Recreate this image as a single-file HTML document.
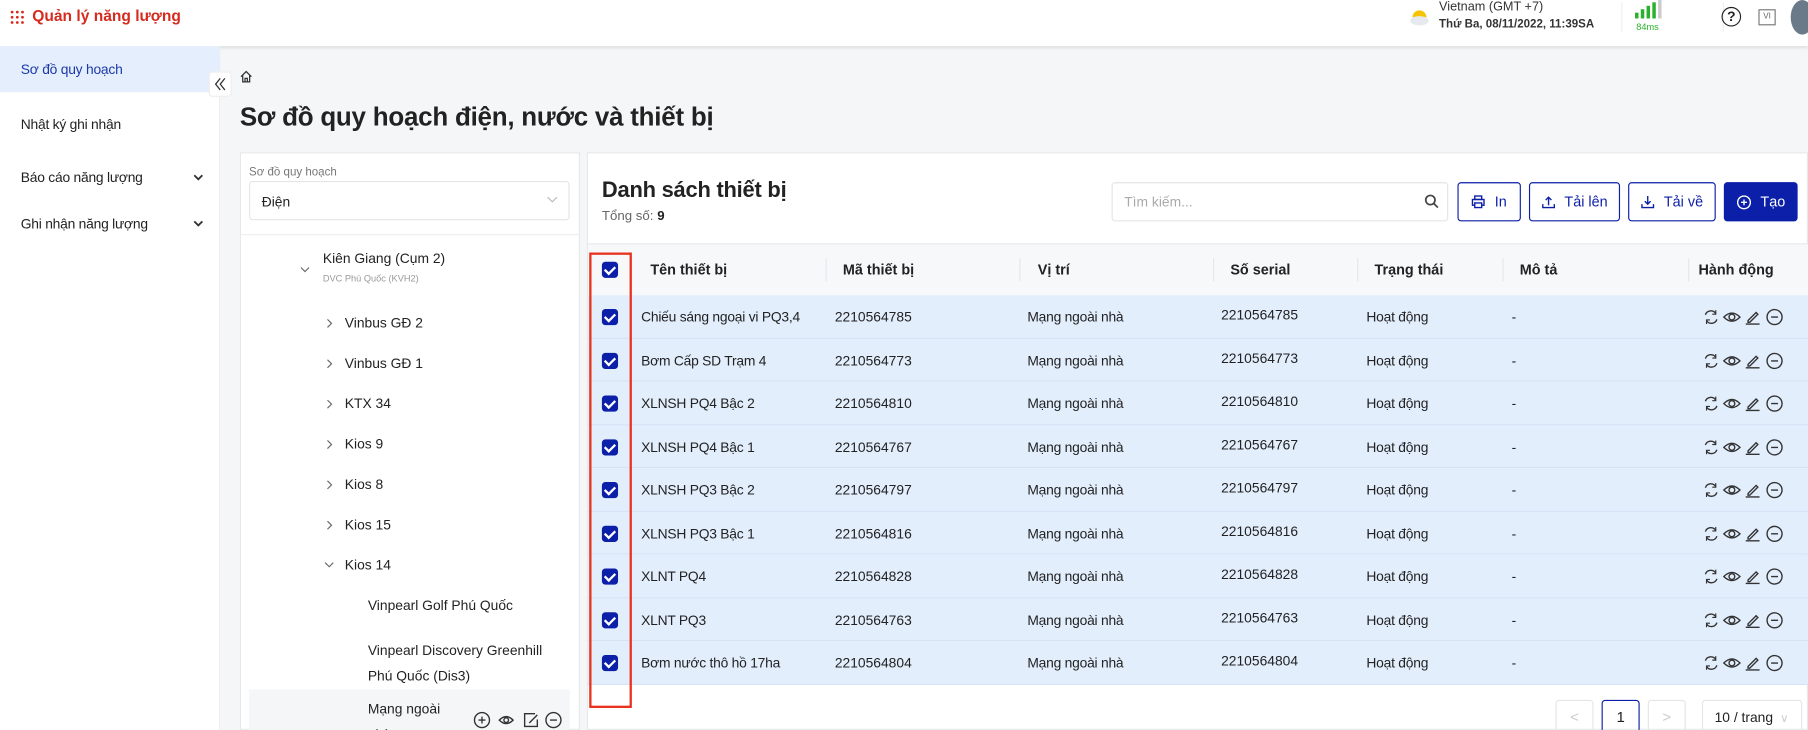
<!DOCTYPE html>
<html><head><meta charset="utf-8"><style>
*{box-sizing:border-box;margin:0;padding:0}
html,body{width:1808px;height:730px;overflow:hidden;background:#f5f6f7}
#r{position:absolute;left:0;top:0;width:1568px;height:633px;transform:scale(1.15306);transform-origin:0 0;font-family:"Liberation Sans",sans-serif;color:#222;background:#f5f6f7;overflow:hidden}
.a{position:absolute;white-space:nowrap}
.cb{position:absolute;width:14px;height:14px;background:#0b1fa8;border-radius:3px}
.cb:after{content:"";position:absolute;left:4px;top:2px;width:4px;height:7px;border:solid #fff;border-width:0 2px 2px 0;transform:rotate(45deg)}
.th{font-size:12.5px;font-weight:bold;color:#222}
.td{font-size:12px;color:#222}
.tx{letter-spacing:-0.2px}
.div{position:absolute;top:224px;width:1px;height:20px;background:#e5e7ea}
.btn{position:absolute;top:158px;height:34px;border:1px solid #0b1fa8;border-radius:3px;color:#0b1fa8;font-size:12.5px;background:#fff;display:flex;align-items:center;justify-content:center;gap:8px}
.tree{font-size:12px;color:#222}
</style></head><body><div id="r">
<div class="a" style="left:0;top:0;width:1568px;height:40px;background:#fff;box-shadow:0 1px 3px rgba(0,0,0,.12)"></div>
<svg class="a" style="left:9px;top:9px" width="12" height="12" viewBox="0 0 12 12" fill="#d62a1e"><circle cx="1.5" cy="1.5" r="1.2"/><circle cx="6" cy="1.5" r="1.2"/><circle cx="10.5" cy="1.5" r="1.2"/><circle cx="1.5" cy="6" r="1.2"/><circle cx="6" cy="6" r="1.2"/><circle cx="10.5" cy="6" r="1.2"/><circle cx="1.5" cy="10.5" r="1.2"/><circle cx="6" cy="10.5" r="1.2"/><circle cx="10.5" cy="10.5" r="1.2"/></svg>
<div class="a" style="left:28px;top:6px;font-size:13.5px;font-weight:bold;color:#d62a1e">Quản lý năng lượng</div>
<svg class="a" style="left:1221px;top:5px" width="20" height="18" viewBox="0 0 20 18"><path d="M4 10a6 6 0 0 1 12 0z" fill="#f5c400"/><ellipse cx="10" cy="13" rx="8" ry="4" fill="#e6e9ee"/></svg>
<div class="a" style="left:1248px;top:0px;font-size:11px;color:#333">Vietnam (GMT +7)</div>
<div class="a" style="left:1248px;top:16px;font-size:10px;font-weight:bold;color:#333">Thứ Ba, 08/11/2022, 11:39SA</div>
<div class="a" style="left:1406px;top:2px;width:1px;height:26px;background:#eee"></div>
<div class="a" style="left:1418px;top:11px;width:3px;height:5px;background:#2bb02b"></div>
<div class="a" style="left:1423px;top:8px;width:3px;height:8px;background:#2bb02b"></div>
<div class="a" style="left:1428px;top:5px;width:3px;height:11px;background:#2bb02b"></div>
<div class="a" style="left:1433px;top:2px;width:3px;height:14px;background:#2bb02b"></div>
<div class="a" style="left:1438px;top:0px;width:3px;height:16px;background:#ccc"></div>
<div class="a" style="left:1419px;top:19px;font-size:8px;color:#2bb02b">84ms</div>
<div class="a" style="left:1494px;top:2px;width:1px;height:26px;background:#eee"></div>
<div class="a" style="left:1493px;top:6px;width:17px;height:17px;border:1.5px solid #222;border-radius:50%;font-size:12px;font-weight:bold;text-align:center;line-height:14px">?</div>
<div class="a" style="left:1525px;top:8px;width:15px;height:14px;border:1px solid #777;font-size:7px;color:#666;text-align:center;line-height:12px">VI</div>
<div class="a" style="left:1553px;top:0px;width:20px;height:30px;border-radius:50%;background:#6a7a88"></div>
<div class="a" style="left:0;top:40px;width:191px;height:593px;background:#fff;border-right:1px solid #eceef0"></div>
<div class="a" style="left:0;top:40px;width:191px;height:40px;background:#e5eefc"></div>
<div class="a tx" style="left:18px;top:53px;font-size:12px;color:#1b3aa8">Sơ đồ quy hoạch</div>
<div class="a tx" style="left:18px;top:101px;font-size:12px;color:#222">Nhật ký ghi nhận</div>
<div class="a tx" style="left:18px;top:147px;font-size:12px;color:#222">Báo cáo năng lượng</div>
<div class="a tx" style="left:18px;top:187px;font-size:12px;color:#222">Ghi nhận năng lượng</div>
<svg class="a" style="left:167px;top:150px" width="10" height="8"><path d="M1.5 2l3.5 3.5 3.5-3.5" stroke="#333" stroke-width="1.6" fill="none"/></svg>
<svg class="a" style="left:167px;top:190px" width="10" height="8"><path d="M1.5 2l3.5 3.5 3.5-3.5" stroke="#333" stroke-width="1.6" fill="none"/></svg>
<div class="a" style="left:181px;top:62px;width:20px;height:22px;background:#fff;border:1px solid #eee;border-radius:3px"></div>
<svg class="a" style="left:184px;top:66px" width="14" height="14"><path d="M7 2L3 7l4 5M11 2L7 7l4 5" stroke="#333" stroke-width="1.1" fill="none"/></svg>
<svg class="a" style="left:207px;top:60px" width="13" height="13"><path d="M2 6.5L6.5 2 11 6.5M3.5 5v6h6V5M5.5 11V8h2v3" stroke="#333" stroke-width="1.1" fill="none"/></svg>
<div class="a" style="left:208px;top:89px;font-size:22.5px;font-weight:bold;color:#222;letter-spacing:-0.2px">Sơ đồ quy hoạch điện, nước và thiết bị</div>
<div class="a" style="left:208px;top:132px;width:295px;height:501px;background:#fff;border:1px solid #e6e8eb"></div>
<div class="a" style="left:216px;top:144px;font-size:10px;color:#777">Sơ đồ quy hoạch</div>
<div class="a" style="left:216px;top:157px;width:278px;height:34px;border:1px solid #e3e5e8;border-radius:3px"></div>
<div class="a tree" style="left:227px;top:168px">Điện</div>
<svg class="a" style="left:474px;top:169px" width="10" height="8"><path d="M1 2l4 4 4-4" stroke="#bbb" stroke-width="1" fill="none"/></svg>
<div class="a" style="left:209px;top:203px;width:293px;height:1px;background:#eceef0"></div>
<div class="a tree" style="left:280px;top:217px">Kiên Giang (Cụm 2)</div>
<div class="a" style="left:280px;top:237px;font-size:8px;color:#999">DVC Phú Quốc (KVH2)</div>
<svg class="a" style="left:260px;top:231px" width="9" height="6"><path d="M1 1l3.5 3.5L8 1" stroke="#666" stroke-width="1" fill="none"/></svg>
<div class="a tree" style="left:299px;top:273px">Vinbus GĐ 2</div>
<div class="a tree" style="left:299px;top:308px">Vinbus GĐ 1</div>
<div class="a tree" style="left:299px;top:343px">KTX 34</div>
<div class="a tree" style="left:299px;top:378px">Kios 9</div>
<div class="a tree" style="left:299px;top:413px">Kios 8</div>
<div class="a tree" style="left:299px;top:448px">Kios 15</div>
<div class="a tree" style="left:299px;top:483px">Kios 14</div>
<svg class="a" style="left:283px;top:276px" width="6" height="9"><path d="M1 1l3.5 3.5L1 8" stroke="#666" stroke-width="1" fill="none"/></svg>
<svg class="a" style="left:283px;top:311px" width="6" height="9"><path d="M1 1l3.5 3.5L1 8" stroke="#666" stroke-width="1" fill="none"/></svg>
<svg class="a" style="left:283px;top:346px" width="6" height="9"><path d="M1 1l3.5 3.5L1 8" stroke="#666" stroke-width="1" fill="none"/></svg>
<svg class="a" style="left:283px;top:381px" width="6" height="9"><path d="M1 1l3.5 3.5L1 8" stroke="#666" stroke-width="1" fill="none"/></svg>
<svg class="a" style="left:283px;top:416px" width="6" height="9"><path d="M1 1l3.5 3.5L1 8" stroke="#666" stroke-width="1" fill="none"/></svg>
<svg class="a" style="left:283px;top:451px" width="6" height="9"><path d="M1 1l3.5 3.5L1 8" stroke="#666" stroke-width="1" fill="none"/></svg>
<svg class="a" style="left:281px;top:487px" width="9" height="6"><path d="M1 1l3.5 3.5L8 1" stroke="#666" stroke-width="1" fill="none"/></svg>
<div class="a tree" style="left:319px;top:518px">Vinpearl Golf Phú Quốc</div>
<div class="a tree" style="left:319px;top:553px;line-height:22px">Vinpearl Discovery Greenhill<br>Phú Quốc (Dis3)</div>
<div class="a" style="left:216px;top:598px;width:278px;height:35px;background:#f5f6f7"></div>
<div class="a tree" style="left:319px;top:604px;line-height:22px">Mạng ngoài<br>nhà</div>
<svg class="a" style="left:410px;top:616px" width="80" height="17" fill="none" stroke="#333" stroke-width="1.2"><circle cx="8" cy="8.5" r="6.5"/><path d="M8 5.5v6M5 8.5h6"/><path d="M23 8.5q6-6 12 0q-6 6-12 0z"/><circle cx="29" cy="8.5" r="2"/><path d="M54 3h-9v11h11v-6M49 11l7-7"/><circle cx="70" cy="8.5" r="6.5"/><path d="M67 8.5h6"/></svg>
<div class="a" style="left:509px;top:132px;width:1059px;height:501px;background:#fff;border:1px solid #e6e8eb"></div>
<div class="a" style="left:522px;top:155px;font-size:19px;font-weight:bold;color:#222;letter-spacing:-0.2px">Danh sách thiết bị</div>
<div class="a" style="left:522px;top:182px;font-size:11.5px;color:#666">Tổng số: <b style="color:#222">9</b></div>
<div class="a" style="left:964px;top:158px;width:292px;height:34px;border:1px solid #e3e5e8;border-radius:3px"></div>
<div class="a" style="left:975px;top:168px;font-size:12px;color:#aaa">Tìm kiếm...</div>
<svg class="a" style="left:1235px;top:168px" width="13" height="13" fill="none" stroke="#444" stroke-width="1.5"><circle cx="5.5" cy="5.5" r="4"/><path d="M8.5 8.5l3.5 3.5"/></svg>
<div class="btn" style="left:1264px;width:55px"><svg width="12" height="12" fill="none" stroke="#0b1fa8" stroke-width="1.2"><rect x="3" y="1" width="6" height="3"/><rect x="1" y="4" width="10" height="5"/><rect x="3" y="7" width="6" height="4" fill="#fff"/></svg>In</div>
<div class="btn" style="left:1326px;width:79px"><svg width="12" height="12" fill="none" stroke="#0b1fa8" stroke-width="1.2"><path d="M1 8v3h10V8M6 9V2M3.5 4.5L6 2l2.5 2.5"/></svg>Tải lên</div>
<div class="btn" style="left:1412px;width:76px"><svg width="12" height="12" fill="none" stroke="#0b1fa8" stroke-width="1.2"><path d="M1 8v3h10V8M6 1v7M3.5 5.5L6 8l2.5-2.5"/></svg>Tải về</div>
<div class="btn" style="left:1495px;width:64px;background:#0b1fa8;color:#fff"><svg width="13" height="13" fill="none" stroke="#fff" stroke-width="1.2"><circle cx="6.5" cy="6.5" r="5.5"/><path d="M6.5 4v5M4 6.5h5"/></svg>Tạo</div>
<div class="a" style="left:510px;top:211px;width:1058px;height:1px;background:#e6e8eb"></div>
<div class="a" style="left:510px;top:212px;width:1058px;height:44px;background:#f7f8f9"></div>
<div class="cb" style="left:522px;top:227px"></div>
<div class="a th" style="left:564px;top:227px">Tên thiết bị</div>
<div class="div" style="left:716px"></div><div class="a th" style="left:731px;top:227px">Mã thiết bị</div>
<div class="div" style="left:884px"></div><div class="a th" style="left:900px;top:227px">Vị trí</div>
<div class="div" style="left:1052px"></div><div class="a th" style="left:1067px;top:227px">Số serial</div>
<div class="div" style="left:1177px"></div><div class="a th" style="left:1192px;top:227px">Trạng thái</div>
<div class="div" style="left:1303px"></div><div class="a th" style="left:1318px;top:227px">Mô tả</div>
<div class="div" style="left:1464px"></div><div class="a th" style="left:1473px;top:227px">Hành động</div>
<div id="rows"></div>
<div class="a" style="left:511px;top:219px;width:37px;height:395px;border:2px solid #e8321e"></div>
<div class="a" style="left:1349px;top:607px;width:33px;height:30px;border:1px solid #e3e5e8;border-radius:3px;color:#ccc;font-size:13px;text-align:center;line-height:28px">&lt;</div>
<div class="a" style="left:1389px;top:607px;width:33px;height:30px;border:1px solid #0b1fa8;border-radius:3px;font-size:13px;text-align:center;line-height:28px">1</div>
<div class="a" style="left:1429px;top:607px;width:33px;height:30px;border:1px solid #e3e5e8;border-radius:3px;color:#ccc;font-size:13px;text-align:center;line-height:28px">&gt;</div>
<div class="a" style="left:1476px;top:607px;width:87px;height:30px;border:1px solid #e3e5e8;border-radius:3px;font-size:12px;padding-left:10px;line-height:28px">10 / trang <span style="color:#ccc;font-size:10px">&nbsp;∨</span></div>
<script>
var d=[["Chiếu sáng ngoại vi PQ3,4","2210564785"],["Bơm Cấp SD Trạm 4","2210564773"],["XLNSH PQ4 Bậc 2","2210564810"],["XLNSH PQ4 Bậc 1","2210564767"],["XLNSH PQ3 Bậc 2","2210564797"],["XLNSH PQ3 Bậc 1","2210564816"],["XLNT PQ4","2210564828"],["XLNT PQ3","2210564763"],["Bơm nước thô hồ 17ha","2210564804"]];
var h="";
var ic='<svg width="72" height="16" fill="none" stroke="#333" stroke-width="1.2"><path d="M3 6a5 5 0 0 1 9-1M13 10a5 5 0 0 1-9 1"/><path d="M12 2v3.5h-3M4 14v-3.5h3" stroke-width="1"/><path d="M19 8q7-7 14 0q-7 7-14 0z"/><circle cx="26" cy="8" r="2.5"/><path d="M38 14h12M40 11l7-7 1.5 1.5-7 7H40z"/><circle cx="63" cy="8" r="6.5"/><path d="M60 8h6"/></svg>';
for(var i=0;i<9;i++){var t=256+i*37.5;
h+='<div class="a" style="left:510px;top:'+t+'px;width:1058px;height:37.5px;background:#e3eefd;border-bottom:1px solid #d6e3f5"></div>';
h+='<div class="cb" style="left:522px;top:'+(t+12)+'px"></div>';
h+='<div class="a td tx" style="left:556px;top:'+(t+12)+'px">'+d[i][0]+'</div>';
h+='<div class="a td" style="left:724px;top:'+(t+12)+'px">'+d[i][1]+'</div>';
h+='<div class="a td tx" style="left:891px;top:'+(t+12)+'px">Mạng ngoài nhà</div>';
h+='<div class="a td" style="left:1059px;top:'+(t+10)+'px">'+d[i][1]+'</div>';
h+='<div class="a td tx" style="left:1185px;top:'+(t+12)+'px">Hoạt động</div>';
h+='<div class="a td" style="left:1311px;top:'+(t+12)+'px">-</div>';
h+='<div class="a" style="left:1476px;top:'+(t+11)+'px">'+ic+'</div>';}
document.getElementById("rows").outerHTML=h;
</script>
</div></body></html>
